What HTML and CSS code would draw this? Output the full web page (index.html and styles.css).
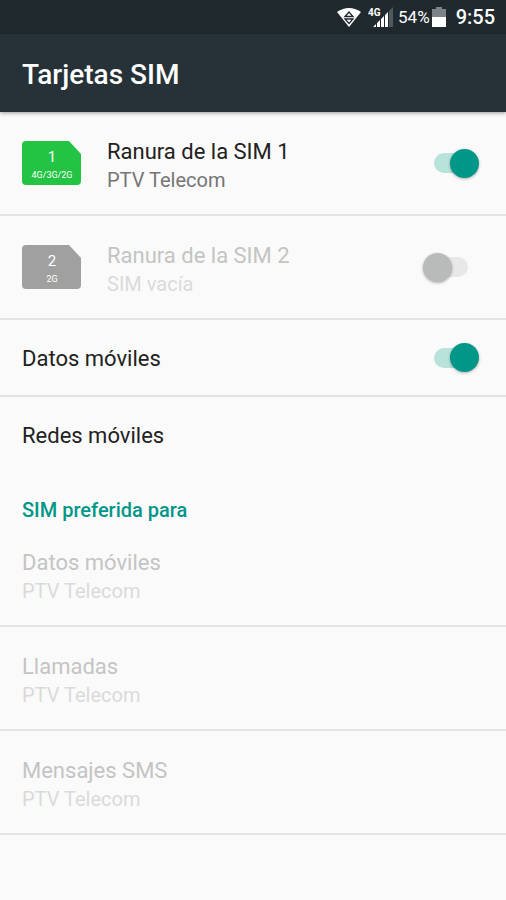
FILE: index.html
```
<!DOCTYPE html>
<html lang="es">
<head>
    <meta charset="UTF-8">
    <meta name="viewport" content="width=device-width, initial-scale=1.0">
    <title>Tarjetas SIM</title>

    <link rel="stylesheet" href="styles.css">
</head>
<body>

    <!-- Barra de estado -->

    <div class="status">
        <svg class="wifi" width="26" height="22" viewBox="0 0 26 22">
            <path d="M1 6 Q13 -2 25 6 L13 21 Z" fill="#fff"/>
            <path d="M9 10.5 L13 6 L17 10.5 Z" fill="#fff" stroke="#20292d" stroke-width="1.3"/>
            <path d="M9 13 H17 L13 17.5 Z" fill="#fff" stroke="#20292d" stroke-width="1.3"/>
        </svg>
        <svg class="signal" width="26" height="22" viewBox="0 0 26 22">
            <text x="0" y="10" class="signal-text">4G</text>
            <path d="M5 21 L8 18 V21 Z M9 21 V17 L12 14 V21 Z M13 21 V13 L16 10 V21 Z M17 21 V9 L20 6 V21 Z" fill="#fff"/>
            <path d="M21 21 V5 L25 1 V21 Z" fill="#50595d"/>
        </svg>
        <span class="percent">54%</span>
        <svg class="battery" width="14" height="22" viewBox="0 0 14 22">
            <path d="M0 3 H4 V1 H10 V3 H14 V12 H0 Z" fill="#7c8487"/>
            <path d="M0 11 H14 V21 H0 Z" fill="#fff"/>
        </svg>
        <span class="clock">9:55</span>
    </div>

    <header class="bar">
        <h1>Tarjetas SIM</h1>
    </header>

    <main>
        <!-- Ranuras -->

        <div class="row tall">
            <svg class="card" width="59" height="44" viewBox="0 0 59 44">
                <path d="M4 0 H47 L59 13 V40 Q59 44 55 44 H4 Q0 44 0 40 V4 Q0 0 4 0 Z" fill="#23c343"/>
                <text x="30" y="21" class="card-num">1</text>
                <text x="30" y="37" class="card-net">4G/3G/2G</text>
            </svg>
            <label class="text" for="sim1">
                <span class="title">Ranura de la SIM 1</span>
                <span class="summary">PTV Telecom</span>
            </label>
            <input type="checkbox" class="switch" id="sim1" checked>
        </div>

        <div class="row tall off">
            <svg class="card" width="59" height="44" viewBox="0 0 59 44">
                <path d="M4 0 H47 L59 13 V40 Q59 44 55 44 H4 Q0 44 0 40 V4 Q0 0 4 0 Z" fill="#a0a0a0"/>
                <text x="30" y="21" class="card-num">2</text>
                <text x="30" y="37" class="card-net">2G</text>
            </svg>
            <label class="text" for="sim2">
                <span class="title">Ranura de la SIM 2</span>
                <span class="summary">SIM vacía</span>
            </label>
            <input type="checkbox" class="switch" id="sim2" disabled>
        </div>

        <!-- Datos y redes -->

        <div class="row">
            <label class="text" for="data">
                <span class="title">Datos móviles</span>
            </label>
            <input type="checkbox" class="switch" id="data" checked>
        </div>

        <button type="button" class="row last">
            <span class="text"><span class="title">Redes móviles</span></span>
        </button>

        <!-- SIM preferida -->

        <h2>SIM preferida para</h2>

        <button type="button" class="row tall off" disabled>
            <span class="text">
                <span class="title">Datos móviles</span>
                <span class="summary">PTV Telecom</span>
            </span>
        </button>

        <button type="button" class="row tall off" disabled>
            <span class="text">
                <span class="title">Llamadas</span>
                <span class="summary">PTV Telecom</span>
            </span>
        </button>

        <button type="button" class="row tall off" disabled>
            <span class="text">
                <span class="title">Mensajes SMS</span>
                <span class="summary">PTV Telecom</span>
            </span>
        </button>
    </main>

</body>
</html>
```
FILE: styles.css
```
* {
    margin: 0;
    padding: 0;
    box-sizing: border-box;
}

body {
    font-family: Roboto, "Liberation Sans", sans-serif;
    font-size: 20px;
    color: #212121;
    background-color: #fafafa;
}

.status {
    display: flex;
    align-items: center;
    justify-content: flex-end;
    height: 34px;
    padding-right: 11px;
    color: #fff;
    background-color: #20292d;
}

.wifi {
    margin-right: 6px;
}

.signal {
    margin-right: 4px;
}
.signal-text {
    font-size: 10px;
    font-weight: 700;
    fill: #fff;
}

.percent {
    margin-right: 2px;
    font-size: 17px;
}

.clock {
    margin-left: 10px;
    font-size: 20px;
    font-weight: 500;
}

.bar {
    position: relative;
    display: flex;
    align-items: center;
    height: 78px;
    padding: 2px 22px 0;
    color: #fff;
    background-color: #263238;
    box-shadow: 0 1px 4px rgba(0, 0, 0, .4);
}

h1 {
    font-size: 28px;
    font-weight: 500;
}

.row {
    display: flex;
    align-items: center;
    width: 100%;
    min-height: 77px;
    padding: 0 27px 0 22px;
    font: inherit;
    color: inherit;
    text-align: left;
    background: none;
    border: 0;
    border-bottom: 2px solid #e3e3e3;
}
.row.tall {
    min-height: 104px;
}
.row.last {
    min-height: 76px;
    border-bottom: 0;
}

.card {
    flex: none;
    margin-right: 26px;
}
.card-num,
.card-net {
    fill: #fff;
    text-anchor: middle;
}
.card-num {
    font-size: 15px;
}
.card-net {
    font-size: 9px;
}

.text {
    flex: 1;
    padding-top: 2px;
}
.tall .text {
    padding-top: 6px;
}

.title,
.summary {
    display: block;
    line-height: 28px;
}
.title {
    font-size: 22px;
}
.summary {
    font-size: 20px;
    color: #757575;
}
.off .title {
    color: #c4c4c4;
}
.off .summary {
    color: #dadada;
}

.switch {
    position: relative;
    display: flex;
    align-items: center;
    flex: none;
    width: 56px;
    height: 29px;
    -webkit-appearance: none;
    appearance: none;
}
.switch::before {
    content: "";
    width: 34px;
    height: 20px;
    margin: 0 auto;
    border-radius: 10px;
    background-color: #e8e8e8;
}
.switch::after {
    content: "";
    position: absolute;
    left: 0;
    width: 29px;
    height: 29px;
    border-radius: 50%;
    background-color: #b9bbba;
    box-shadow: 0 1px 3px rgba(0, 0, 0, .3);
}
.switch:checked::before {
    background-color: #b8e3da;
}
.switch:checked::after {
    left: auto;
    right: 0;
    background-color: #009688;
}

h2 {
    padding: 24px 22px 0;
    font-size: 20px;
    font-weight: 500;
    line-height: 26px;
    color: #009688;
}
```
